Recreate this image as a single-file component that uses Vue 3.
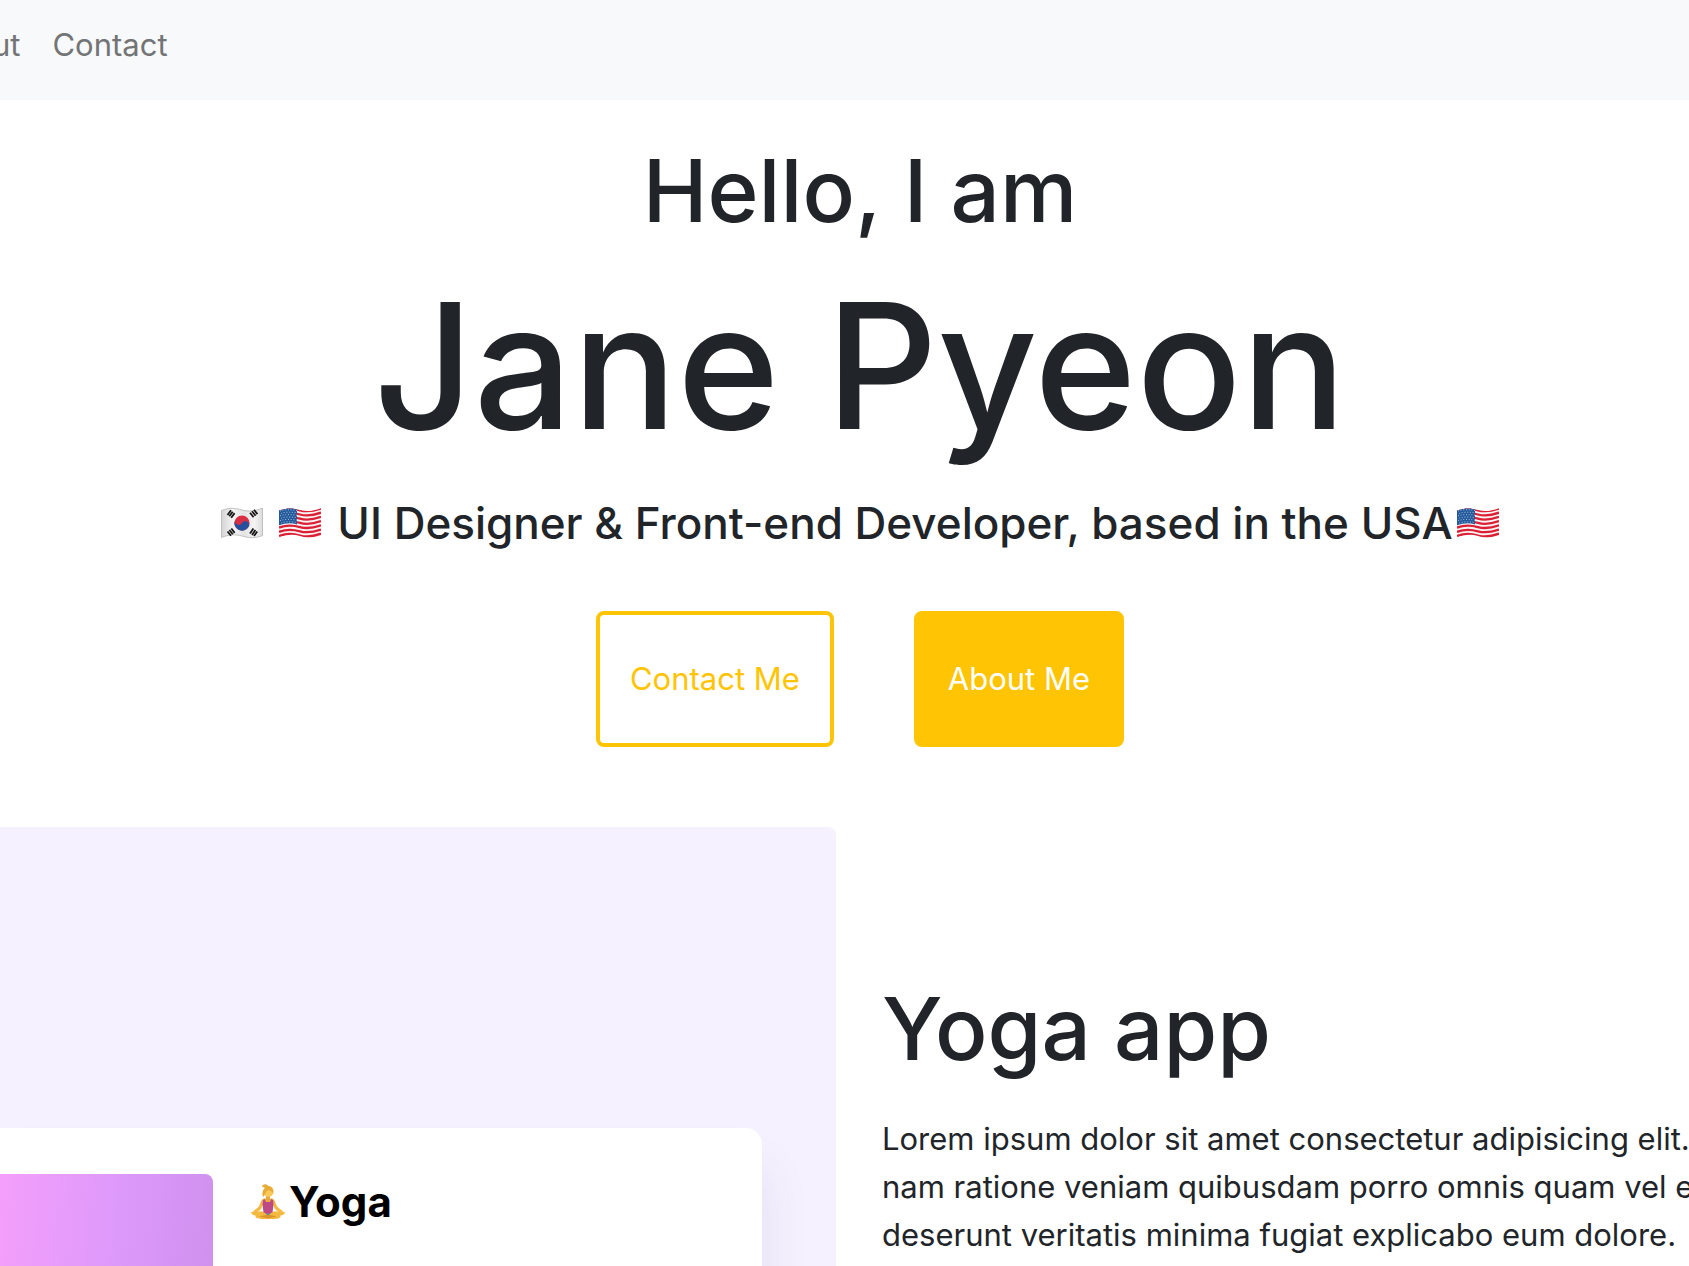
<template>
  <div class="page">
    <nav class="navbar">
      <a class="nav-link" href="#about">About</a>
      <a class="nav-link" href="#contact">Contact</a>
    </nav>

    <!-- Hero -->
    <header class="hero">
      <h1 class="greeting">Hello, I am</h1>
      <h1 class="name">Jane Pyeon</h1>
      <h2 class="tagline">
        <svg class="flag" viewBox="0 0 42 32" role="img" aria-label="Korea">
          <defs>
            <linearGradient id="cloth" x1="0" x2="1" y1="0" y2="0">
              <stop offset="0" stop-color="#d4d4d4" />
              <stop offset="0.28" stop-color="#f4f4f4" />
              <stop offset="0.55" stop-color="#e4e4e4" />
              <stop offset="0.8" stop-color="#f4f4f4" />
              <stop offset="1" stop-color="#dcdcdc" />
            </linearGradient>
          </defs>
          <path d="M.5 3.500C8 .5 14 1 21 3S34 4 41.500 1.200V28.500C34 31.500 28 31 21 29S8 27.500 .5 30.500Z" fill="url(#cloth)" stroke="#b4b4b4" stroke-width=".8" />
          <circle cx="21" cy="16" r="7.600" fill="#d92f45" />
          <path d="M14.500 12A7.600 7.600 0 1 0 27.500 20A3.800 3.800 0 0 0 21 16A3.800 3.800 0 0 1 14.500 12Z" fill="#26509b" />
          <path
            d="M8.300 9.300L11.700 4.700M10.200 10.700L13.600 6.100M6.500 8L10 3.300M29 5.800L32.600 10.300M31 4.200L34.600 8.700M33 2.700L36.400 7.100M6.500 24.500L10 28.800M8.400 23L11.800 27.300M10.300 21.500L13.700 25.900M29 26.500L32.400 21.500M31 28L34.400 23M33 29L36.200 24.500"
            stroke="#151515"
            stroke-width="1.800"
          />
        </svg>
        <svg class="flag" viewBox="0 0 42 32" role="img" aria-label="USA">
          <use href="#usa" />
        </svg>
        <span>UI Designer &amp; Front-end Developer, based in the USA</span>
        <svg class="flag flag-end" viewBox="0 0 42 32" role="img" aria-label="USA">
          <defs>
            <clipPath id="wave">
              <path d="M0 3.500C8 .5 14 1 21 3S34 4 42 1.200V28.500C34 31.500 28 31 21 29S8 27.500 0 30.500Z" />
            </clipPath>
            <g id="usa" clip-path="url(#wave)">
              <path d="M0 0H42V32H0Z" fill="#f7f3f2" />
              <path v-for="n in 7" :key="n" :d="stripe(n)" fill="none" stroke="#dd1f35" stroke-width="2.300" />
              <path d="M0 0H18V17.500C12 15.500 6 16.300 0 18.300Z" fill="#245a9c" />
              <path v-for="n in 6" :key="'s' + n" :d="starRow(n)" stroke="#a3c0de" stroke-width="1" stroke-dasharray="1 1.700" fill="none" />
            </g>
          </defs>
          <use href="#usa" />
        </svg>
      </h2>
      <div class="actions">
        <button class="btn btn-outline" type="button">Contact Me</button>
        <button class="btn btn-solid" type="button">About Me</button>
      </div>
    </header>

    <!-- Project -->
    <main class="project">
      <div class="preview">
        <article class="app-card">
          <div class="app-cover"></div>
          <h3 class="app-title">
            <svg class="yogi" viewBox="0 0 34 36" aria-hidden="true">
              <path d="M12.500 14.500C9.500 16 9.500 20 7.500 23L2.500 27L1 29L4 30L10 25L13 19H21L24 25L30 30L33 29L31.500 27L26.500 23C24.500 20 24.500 16 21.500 14.500Z" fill="#f3b944" />
              <path d="M0 28L5 28.300C9 26.500 12 27 17 30C22 27 25 26.500 29 28.300L34 28L33 30.500L29.500 31.500C30 34.500 27 35.500 17 35C7 35.500 4 34.500 4.500 31.500L1 30.500Z" fill="#f5b93f" />
              <path d="M8 32.500L17 30.500L26 32.500L17 34.500Z" fill="#dc942d" />
              <path d="M13.500 28.500H20.500L18 31H16Z" fill="#62909a" />
              <path d="M15 11H19V16L17 19L15 16Z" fill="#e9a93a" />
              <path d="M12 16L14 15L15 18H19L20 15L22 16L22.500 20L21.500 28.500C18 30 16 30 12.500 28.500L11.500 20Z" fill="#bd4a86" />
              <circle cx="17.500" cy="8" r="5" fill="#f9c95a" />
              <path d="M12 13C10.500 9 12 5.500 14 4L11 2.500C12 0 15 -.5 17.500 2C22 2.500 23 6 22 9C20.500 7 18 6 16.500 6.500C14 8 14.500 11 12 13Z" fill="#e9ab35" />
            </svg>
            <span>Yoga</span>
          </h3>
        </article>
      </div>
      <section class="details">
        <h1 class="project-title">Yoga app</h1>
        <p class="description">
          Lorem ipsum dolor sit amet consectetur adipisicing elit.<br />
          nam ratione veniam quibusdam porro omnis quam vel eos<br />
          deserunt veritatis minima fugiat explicabo eum dolore.
        </p>
      </section>
    </main>
  </div>
</template>

<script setup>
const stripe = (n) => {
  const y = n * 4.2 - 1.4
  return `M0 ${y + 1}C8 ${y - 2} 14 ${y - 1.5} 21 ${y + 0.5}S34 ${y + 1.5} 42 ${y - 1.3}`
}

const starRow = (n) => {
  const y = n * 2.4 + 1.6
  return `M${n % 2 ? 1 : 2.3} ${y}C6 ${y - 1.5} 12 ${y - 1.5} 18 ${y - 0.5}`
}
</script>

<style>
body {
  margin: 0;
  background: #fff;
}
</style>

<style scoped>
.page {
  display: flex;
  flex-direction: column;
  height: 100vh;
  overflow: hidden;
  font-family: Inter, 'Liberation Sans', sans-serif;
  font-size: 31px;
  line-height: 48px;
  color: #212529;
}

h1,
h2,
h3,
p {
  margin: 0;
  font-weight: 500;
}

/* Navbar */
.navbar {
  display: flex;
  flex-shrink: 0;
  gap: 32px;
  height: 79px;
  margin-left: -67px;
  padding-top: 21px;
  background: #f8f9fa;
}

.nav-link {
  color: #737475;
  text-decoration: none;
}

/* Hero */
.hero {
  display: flex;
  flex-direction: column;
  align-items: center;
  padding: 33px 0 80px 31px;
}

.greeting,
.project-title {
  font-size: 87px;
  line-height: 116px;
}

.name {
  font-size: 174px;
  line-height: 234px;
}

.tagline {
  display: flex;
  align-items: center;
  padding-top: 11px;
  font-size: 44px;
  line-height: 58px;
  white-space: nowrap;
}

.flag {
  width: 42px;
  height: 32px;
  margin-right: 16px;
}

.flag-end {
  margin: 0 0 0 4px;
}

.actions {
  display: flex;
  gap: 80px;
  padding-top: 59px;
}

.btn {
  height: 136px;
  padding: 0 30px;
  border: 4px solid #ffc404;
  border-radius: 8px;
  font: inherit;
  cursor: pointer;
}

.btn-outline {
  background: #fff;
  color: #ffc404;
}

.btn-solid {
  background: #ffc404;
  color: #fff;
}

/* Project */
.project {
  display: grid;
  flex: 1;
  grid-template-columns: repeat(2, minmax(0, 1fr));
  gap: 46px;
  min-height: 0;
  padding-left: 29px;
}

.preview {
  margin-left: -29px;
  padding: 301px 74px 0 0;
  overflow: hidden;
  border-top-right-radius: 8px;
  background: #f5f1fe;
}

.app-card {
  display: flex;
  gap: 38px;
  height: 480px;
  padding-top: 46px;
  border-top-right-radius: 16px;
  background: #fff;
  box-shadow: 0 40px 50px rgba(80, 70, 150, 0.1);
}

.app-cover {
  width: 213px;
  border-top-right-radius: 8px;
  background: linear-gradient(95deg, #f49ffb, #dd99fa 48%, #cb8eea);
}

.app-title {
  display: flex;
  align-items: flex-start;
  gap: 4px;
  font-size: 42px;
  font-weight: 700;
  line-height: 56px;
  color: #000;
}

.yogi {
  width: 34px;
  height: 36px;
  margin-top: 10px;
}

.details {
  padding-top: 144px;
}

.description {
  padding-top: 28px;
  font-weight: 400;
  white-space: nowrap;
}
</style>
